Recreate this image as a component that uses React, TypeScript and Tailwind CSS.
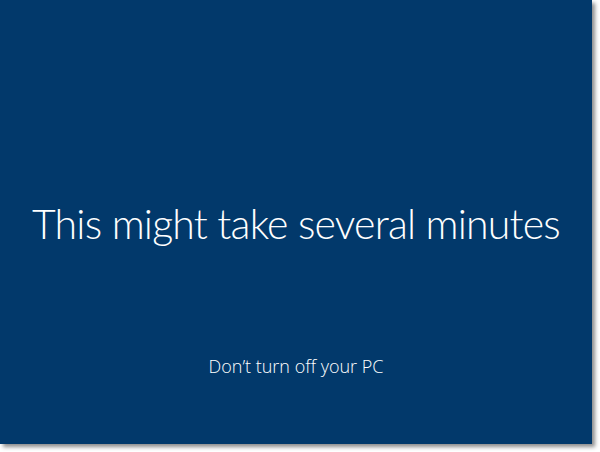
export default function App() {
  return (
    <main className="w-[600px] h-[452px] bg-white overflow-hidden">
      <div className="w-[592px] h-[444px] bg-[#02396b] shadow-[3px_3px_4px_rgba(0,0,0,0.45)] flex flex-col items-center text-white font-light">
        <h1 className="mt-[203px] whitespace-nowrap font-['Lato',sans-serif] text-[41px] leading-none tracking-[-0.8px]">
          This might take several minutes
        </h1>
        <p className="mt-[113px] whitespace-nowrap font-['Open_Sans',sans-serif] text-[18px] leading-none">
          Don’t turn off your PC
        </p>
      </div>
    </main>
  );
}
